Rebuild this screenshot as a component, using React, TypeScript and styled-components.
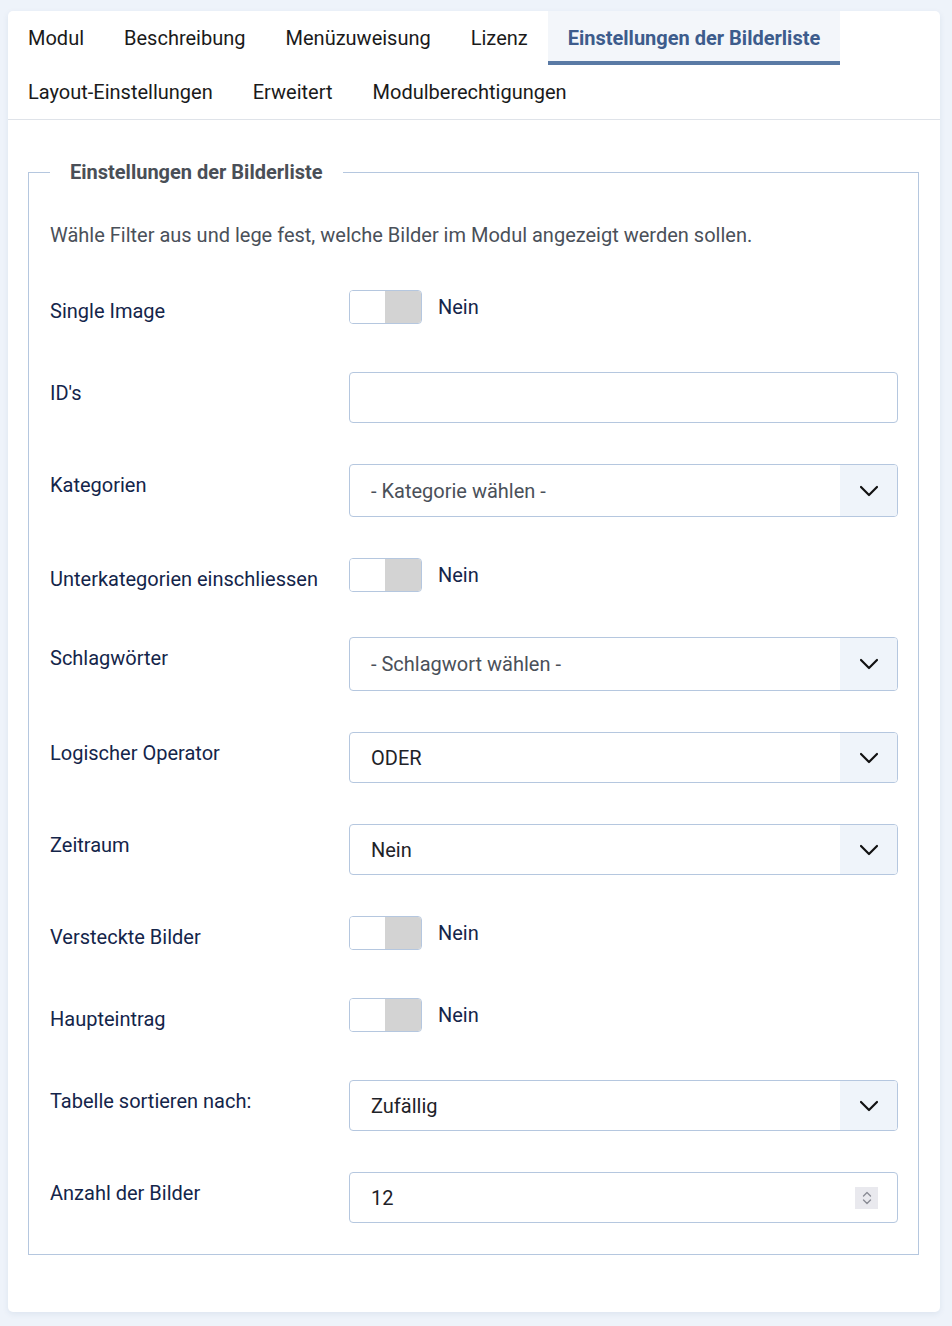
import React from "react";
import styled, { createGlobalStyle } from "styled-components";

const Global = createGlobalStyle`
  html, body { margin: 0; padding: 0; }
  body {
    background: #eef3fa;
    font-family: Roboto, "Noto Sans", "Liberation Sans", sans-serif;
    -webkit-font-smoothing: antialiased;
  }
  * { box-sizing: border-box; }
`;

const Page = styled.div`
  padding: 11px 12px 15px 8px;
`;

const Card = styled.div`
  background: #fff;
  border-radius: 5px;
  box-shadow: 0 2px 6px rgba(30, 60, 120, 0.08);
  padding-bottom: 57px;
`;

const TabBar = styled.div`
  display: flex;
  flex-wrap: wrap;
  border-bottom: 1px solid #dfe3e9;
`;

const TabRow = styled.div`
  display: flex;
  width: 100%;
`;

const Tab = styled.div<{ $active?: boolean }>`
  height: 54px;
  padding: 0 20px;
  display: flex;
  align-items: center;
  font-size: 20px;
  color: ${(p) => (p.$active ? "#3d5c8c" : "#1a1a1a")};
  font-weight: ${(p) => (p.$active ? 700 : 400)};
  background: ${(p) => (p.$active ? "#f3f6fa" : "transparent")};
  box-shadow: ${(p) => (p.$active ? "inset 0 -4px 0 #5a7aa5" : "none")};
`;

const Body = styled.div`
  padding: 40px 21px 0 20px;
`;

const Fieldset = styled.fieldset`
  margin: 0;
  border: 1px solid #b5c7df;
  padding: 36px 20px 31px 21px;
  min-width: 0;
`;

const Legend = styled.legend`
  margin-left: 0;
  padding: 0 20px;
  font-size: 20px;
  line-height: 24px;
  font-weight: 700;
  color: #4a4f57;
`;

const Desc = styled.p`
  margin: 0 0 40px 0;
  font-size: 20px;
  line-height: 30px;
  color: #4a5059;
`;

const Row = styled.div<{ $gap?: number }>`
  display: grid;
  grid-template-columns: 299px 1fr;
  margin-bottom: ${(p) => p.$gap ?? 41}px;
  &:last-child { margin-bottom: 0; }
`;

const Label = styled.label`
  padding: 6px 0 5px;
  min-height: 41px;
  font-size: 20px;
  line-height: 30px;
  color: #14254a;
`;

const ToggleWrap = styled.div`
  display: flex;
  align-items: flex-start;
  gap: 16px;
`;

const Toggle = styled.div`
  width: 73px;
  height: 34px;
  border: 1px solid #b5c7df;
  border-radius: 4px;
  overflow: hidden;
  display: grid;
  grid-template-columns: 35px 1fr;
`;

const ToggleHalf = styled.span<{ $on?: boolean }>`
  background: ${(p) => (p.$on ? "#d3d3d3" : "#fff")};
`;

const ToggleText = styled.span`
  font-size: 20px;
  line-height: 34px;
  height: 34px;
  color: #14254a;
`;

const Field = styled.div<{ $h?: number }>`
  position: relative;
  height: ${(p) => p.$h ?? 51}px;
  border: 1px solid #b5c7df;
  border-radius: 4px;
  display: flex;
  align-items: center;
  overflow: hidden;
  background: #fff;
`;

const FieldText = styled.span<{ $placeholder?: boolean }>`
  flex: 1;
  padding-left: 21px;
  font-size: 20px;
  color: ${(p) => (p.$placeholder ? "#4a5059" : "#1e2228")};
`;

const Arrow = styled.span`
  width: 57px;
  align-self: stretch;
  background: #eff4fa;
  display: flex;
  align-items: center;
  justify-content: center;
`;

const Spinner = styled.span`
  position: absolute;
  right: 19px;
  top: 14px;
  width: 23px;
  height: 22px;
  background: #e9e9ee;
  display: flex;
  align-items: center;
  justify-content: center;
`;

const Chevron = () => (
  <svg width="20" height="12" viewBox="0 0 20 12" fill="none">
    <path d="M2 2l8 8 8-8" stroke="#111" strokeWidth="2.2" strokeLinecap="round" strokeLinejoin="round" />
  </svg>
);

const SpinIcon = () => (
  <svg width="12" height="18" viewBox="0 0 12 18" fill="none">
    <path d="M2.5 7l3.5-3.5L9.5 7" stroke="#8a8c96" strokeWidth="1.4" strokeLinecap="round" strokeLinejoin="round" />
    <path d="M2.5 11l3.5 3.5L9.5 11" stroke="#8a8c96" strokeWidth="1.4" strokeLinecap="round" strokeLinejoin="round" />
  </svg>
);

const ToggleField = () => (
  <ToggleWrap>
    <Toggle>
      <ToggleHalf />
      <ToggleHalf $on />
    </Toggle>
    <ToggleText>Nein</ToggleText>
  </ToggleWrap>
);

const Select = ({ text, placeholder, h }: { text: string; placeholder?: boolean; h?: number }) => (
  <Field $h={h}>
    <FieldText $placeholder={placeholder}>{text}</FieldText>
    <Arrow>
      <Chevron />
    </Arrow>
  </Field>
);

export default function App() {
  return (
    <>
      <Global />
      <Page>
        <Card>
          <TabBar>
            <TabRow>
              <Tab>Modul</Tab>
              <Tab>Beschreibung</Tab>
              <Tab>Menüzuweisung</Tab>
              <Tab>Lizenz</Tab>
              <Tab $active>Einstellungen der Bilderliste</Tab>
            </TabRow>
            <TabRow>
              <Tab>Layout-Einstellungen</Tab>
              <Tab>Erweitert</Tab>
              <Tab>Modulberechtigungen</Tab>
            </TabRow>
          </TabBar>
          <Body>
            <Fieldset>
              <Legend>Einstellungen der Bilderliste</Legend>
              <Desc>Wähle Filter aus und lege fest, welche Bilder im Modul angezeigt werden sollen.</Desc>
              <Row>
                <Label>Single Image</Label>
                <ToggleField />
              </Row>
              <Row>
                <Label>ID's</Label>
                <Field>
                  <FieldText />
                </Field>
              </Row>
              <Row>
                <Label>Kategorien</Label>
                <Select text="- Kategorie wählen -" placeholder h={53} />
              </Row>
              <Row $gap={38}>
                <Label>Unterkategorien einschliessen</Label>
                <ToggleField />
              </Row>
              <Row>
                <Label>Schlagwörter</Label>
                <Select text="- Schlagwort wählen -" placeholder h={54} />
              </Row>
              <Row>
                <Label>Logischer Operator</Label>
                <Select text="ODER" />
              </Row>
              <Row>
                <Label>Zeitraum</Label>
                <Select text="Nein" />
              </Row>
              <Row>
                <Label>Versteckte Bilder</Label>
                <ToggleField />
              </Row>
              <Row>
                <Label>Haupteintrag</Label>
                <ToggleField />
              </Row>
              <Row>
                <Label>Tabelle sortieren nach:</Label>
                <Select text="Zufällig" />
              </Row>
              <Row>
                <Label>Anzahl der Bilder</Label>
                <Field>
                  <FieldText>12</FieldText>
                  <Spinner>
                    <SpinIcon />
                  </Spinner>
                </Field>
              </Row>
            </Fieldset>
          </Body>
        </Card>
      </Page>
    </>
  );
}
